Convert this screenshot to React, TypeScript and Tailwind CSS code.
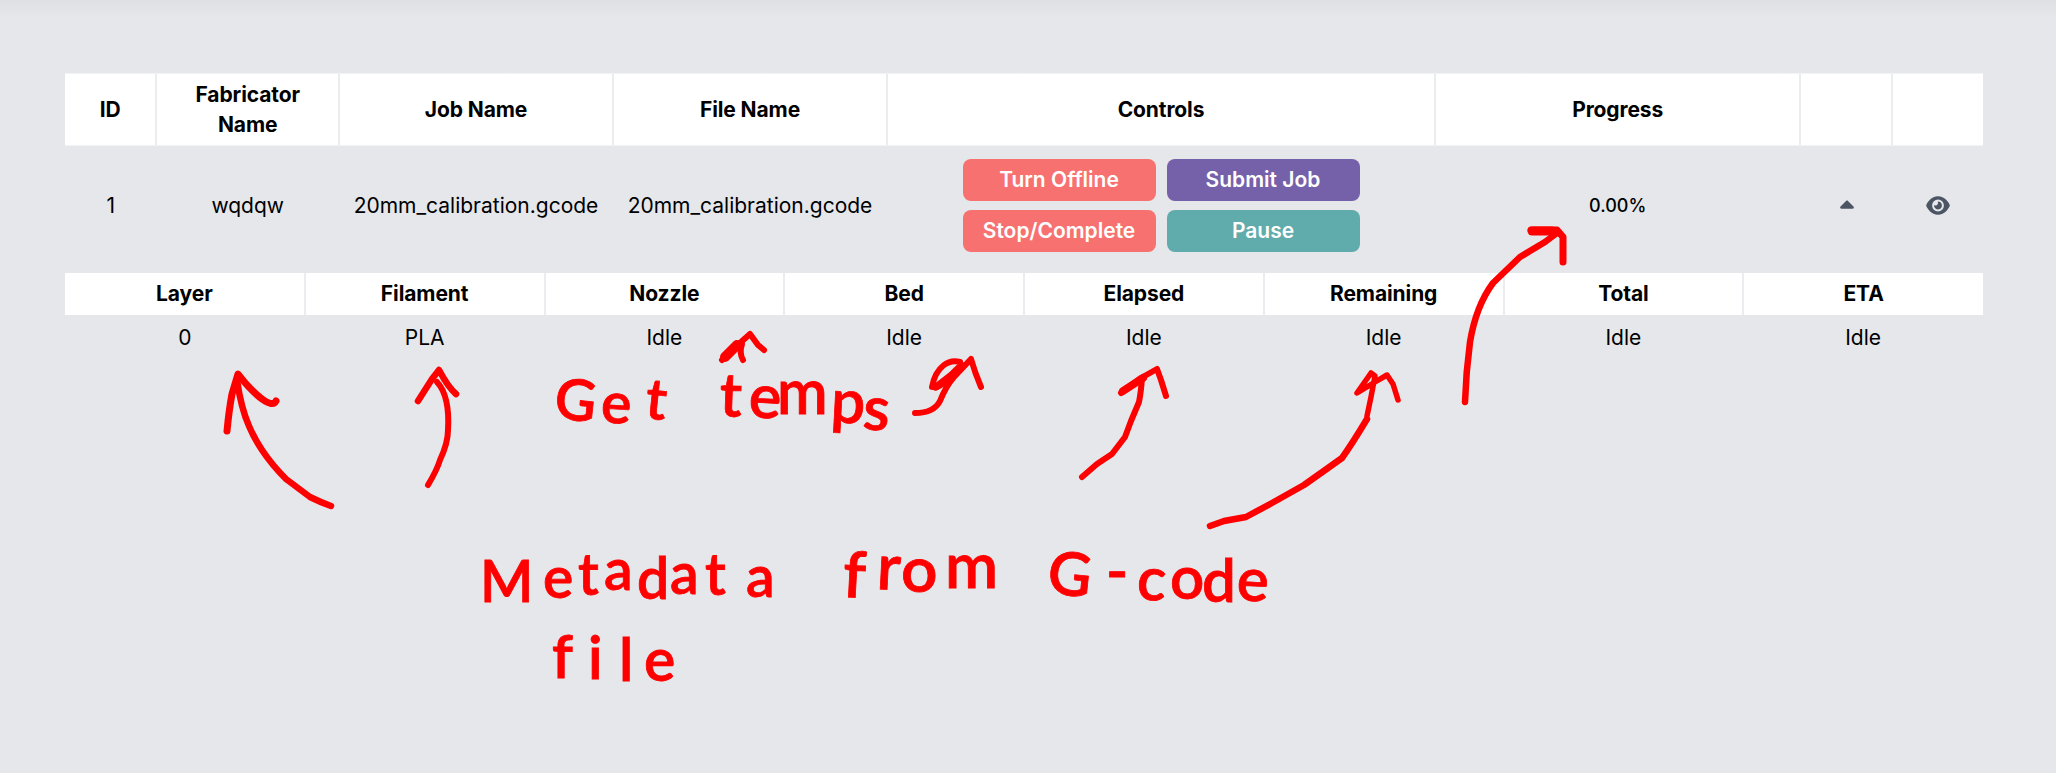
import { FaCaretUp, FaEye } from "react-icons/fa6";

const columns = [
  { label: "ID", span: "col-span-1" },
  { label: "Fabricator Name", span: "col-span-2" },
  { label: "Job Name", span: "col-span-3" },
  { label: "File Name", span: "col-span-3" },
  { label: "Controls", span: "col-span-6" },
  { label: "Progress", span: "col-span-4" },
  { label: "", span: "col-span-1" },
  { label: "", span: "col-span-1" },
];

const details = [
  ["Layer", "0"],
  ["Filament", "PLA"],
  ["Nozzle", "Idle"],
  ["Bed", "Idle"],
  ["Elapsed", "Idle"],
  ["Remaining", "Idle"],
  ["Total", "Idle"],
  ["ETA", "Idle"],
];

const actions = [
  { label: "Turn Offline", color: "bg-[#f87171]" },
  { label: "Submit Job", color: "bg-[#7561a9]" },
  { label: "Stop/Complete", color: "bg-[#f87171]" },
  { label: "Pause", color: "bg-[#60abac]" },
];

const arrows = [
  { d: "M331 506 Q320 502 310 497 L286 479 Q272 465 262 450 Q254 438 249 426 Q241 408 237 380", w: 6.5 },
  { d: "M227 431 Q229 410 232 394 L238 374 Q250 390 262 399 Q273 407 276 401", w: 7 },
  { d: "M428 485 Q437 470 440 460 Q448 443 448 430 Q450 396 437 382", w: 6 },
  { d: "M418 401 L432 379 L439 370 Q448 387 456 394", w: 6.5 },
  { d: "M722 360 L731 350 L741 342 L750 334 L758 345 L764 350", w: 6 },
  { d: "M724 358 L733 350 L742 344 Q739 353 743 360", w: 6 },
  { d: "M725 357 L737 345", w: 10 },
  { d: "M915 413 Q934 413 940 401 Q946 386 954 377 L971 359 Q975 373 981 387", w: 6 },
  { d: "M960 362 C949 359 936 366 932 387 C942 390 950 374 960 366", w: 6 },
  { d: "M936 387 L963 366", w: 7 },
  { d: "M1082 477 L1097 464 L1112 454 L1125 437 L1131 421 L1139 402 Q1141 392 1142 378", w: 6 },
  { d: "M1121 393 L1141 378 L1157 369 L1161 380 L1166 396", w: 6 },
  { d: "M1123 391 L1143 378", w: 8 },
  { d: "M1210 526 L1224 521 L1246 517 L1272 503 L1304 485 L1328 468 L1342 458 Q1352 444 1367 419", w: 6.5 },
  { d: "M1367 416 L1371 397 L1375 376 L1371 373 L1357 393 L1375 382 L1387 375 L1393 384 L1398 400", w: 5.5 },
  { d: "M1465 402 Q1466 372 1470 342 Q1476 306 1493 283 L1520 257 L1545 242 L1557 233", w: 6.5 },
  { d: "M1531 230 L1557 230 L1563 237 L1563 262", w: 7 },
  { d: "M1532 231 L1552 231", w: 9 },
];

function Annotations() {
  return (
    <svg
      className="pointer-events-none absolute inset-0 font-['Lato',sans-serif]"
      width="2056"
      height="773"
      viewBox="0 0 2056 773"
      fill="none"
    >
      <g stroke="#ff0000" strokeLinecap="round" strokeLinejoin="round">
        {arrows.map((a) => (
          <path key={a.d} d={a.d} strokeWidth={a.w} />
        ))}
      </g>
      <g fill="#ff0000" stroke="#ff0000" strokeWidth="0.8" fontWeight="600">
        <text x="553 600 644" y="418 422 418" rotate="6 4 6" fontSize="57">Get</text>
        <text x="719 748 777 830 862" y="416 417 414 422 429" rotate="2 3 0 3 4" fontSize="61">temps</text>
        <text x="480 543 578 604 637 670 705 746" y="602 598 595 590 599 594 595 597" fontSize="57">Metadata</text>
        <text x="842 876 901 945" y="597 589 592 588" rotate="3 3 0 0" fontSize="64">from</text>
        <text x="1046 1106 1136 1170 1202 1236" y="593 592 599 599 602 600" rotate="6 0 4 0 0 3" fontSize="60">G-code</text>
        <text x="552 588 619 644" y="678 679 681 681" fontSize="59">file</text>
      </g>
    </svg>
  );
}

export default function App() {
  return (
    <main className="relative h-[773px] w-[2056px] overflow-hidden bg-[#e5e7eb] pl-[65px] pr-[73px] font-['Inter',sans-serif] text-[21px] leading-[30px] text-black">
      <div className="-ml-[65px] h-[73px] w-[2056px] bg-linear-to-b from-[#dfe0e4] to-[#e5e7eb] to-25%" />
      <section>
        <div className="grid h-[73px] grid-cols-21 border-y border-[#f2f3f5] bg-white text-center font-bold tracking-[-0.1px]">
          {columns.map((c, i) => (
            <div
              key={i}
              className={`${c.span} flex items-center justify-center border-x border-[#ebecf0] px-4 first:border-l-0 last:border-r-0`}
            >
              {c.label}
            </div>
          ))}
        </div>
        <div className="grid h-[127px] grid-cols-21 items-center pb-2 text-center">
          <div className="col-span-1">1</div>
          <div className="col-span-2">wqdqw</div>
          <div className="col-span-3">20mm_calibration.gcode</div>
          <div className="col-span-3">20mm_calibration.gcode</div>
          <div className="col-span-6 grid grid-cols-[193px_193px] justify-center gap-x-[11px] gap-y-[9px]">
            {actions.map((a) => (
              <button
                key={a.label}
                className={`${a.color} h-[42px] rounded-lg font-semibold text-white`}
              >
                {a.label}
              </button>
            ))}
          </div>
          <div className="col-span-4 text-[18px] font-medium">0.00%</div>
          <div className="col-span-1 flex justify-center pl-0.5 text-[#4b5563]">
            <FaCaretUp className="h-[22px] w-[14px]" />
          </div>
          <div className="col-span-1 flex justify-center pl-0.5 text-[#4b5563]">
            <FaEye className="h-[21px] w-6" />
          </div>
        </div>
      </section>
      <section className="grid grid-cols-8 text-center">
        {details.map(([label, value]) => (
          <div key={label} className="group">
            <div className="flex h-[42px] items-center justify-center border-x border-[#ebecf0] bg-white font-bold tracking-[-0.1px] group-first:border-l-0 group-last:border-r-0">
              {label}
            </div>
            <div className="flex h-[46px] items-center justify-center">{value}</div>
          </div>
        ))}
      </section>
      <Annotations />
    </main>
  );
}
